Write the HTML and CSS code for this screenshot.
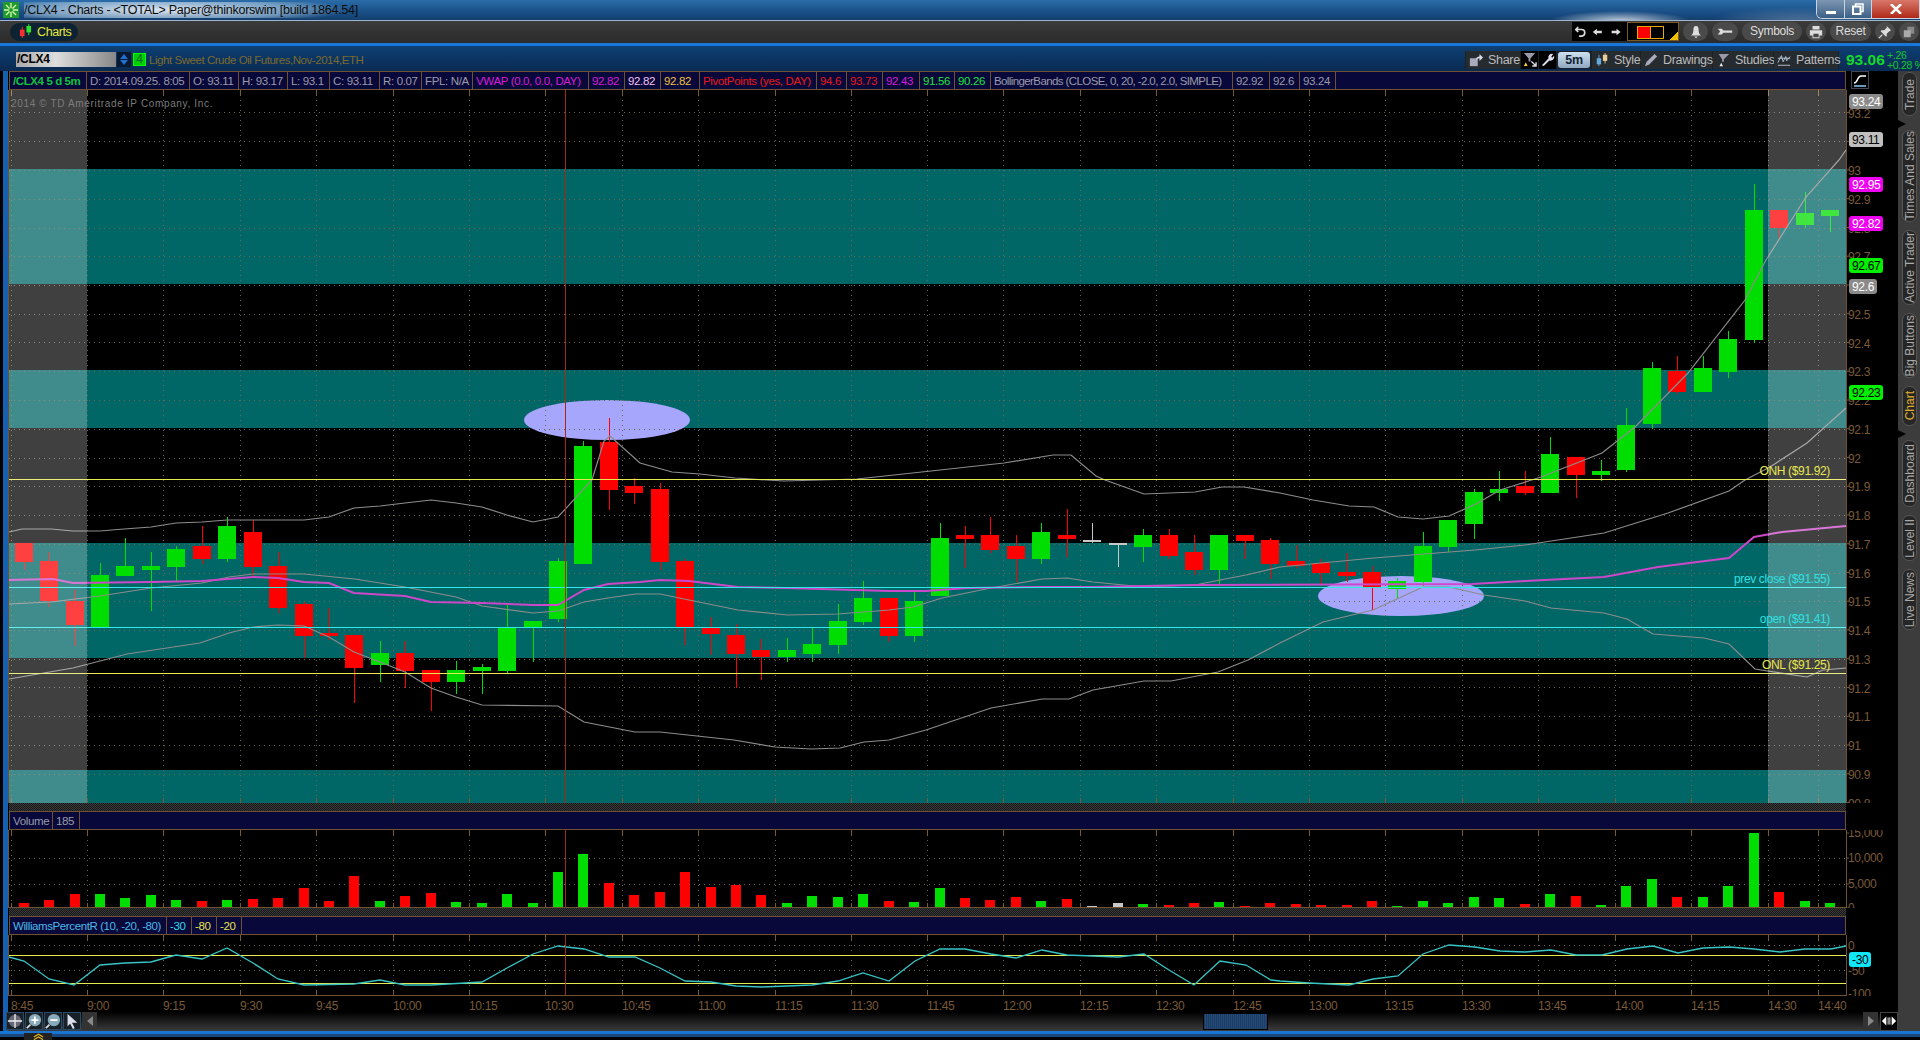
FILE: index.html
```html
<!DOCTYPE html>
<html lang="en">
<head>
    <meta charset="UTF-8">
    <meta name="viewport" content="width=device-width, initial-scale=1.0">
    <title>/CLX4 - Charts</title>
    <link rel="stylesheet" href="styles.css">
</head>
<body>
    <header class="titlebar">
        <svg class="app-logo" viewBox="0 0 16 16">
            <rect width="16" height="16" fill="#1f9a2c"/>
            <path d="M8 1v14M1 8h14M3 3l10 10M13 3L3 13" stroke="#d8f8b0" stroke-width="1.4"/>
            <circle cx="8" cy="8" r="2" fill="#1f9a2c"/>
        </svg>
        <span class="title-text">/CLX4 - Charts - &lt;TOTAL&gt; Paper@thinkorswim [build 1864.54]</span>
        <div class="window-buttons">
            <div class="win-btn win-min"><span class="win-min-bar"></span></div>
            <div class="win-btn win-max">
                <svg class="win-max-icon" viewBox="0 0 12 12"><path d="M3.500 3V1h7.500v7.500H9" fill="none" stroke="#fff" stroke-width="1.500"/><path d="M1 3.500h7.500V11H1z" fill="none" stroke="#fff" stroke-width="2"/></svg>
            </div>
            <div class="win-btn win-close">
                <svg class="win-close-icon" viewBox="0 0 12 10"><path d="M1 0l10 10M11 0L1 10" stroke="#fff" stroke-width="2.500"/></svg>
            </div>
        </div>
    </header>

    <nav class="menubar">
        <div class="charts-pill">
            <svg class="charts-icon" viewBox="0 0 14 16">
                <path d="M3.500 3v12" stroke="#ff3030"/><rect x="1" y="6" width="5" height="7" fill="#ff3030"/>
                <path d="M10.500 0v12" stroke="#30e030"/><rect x="8" y="2" width="5" height="7" fill="#30e030"/>
            </svg>
            <span>Charts</span>
        </div>
        <div class="menu-right">
            <div class="history-box">
                <svg class="hist-icon" viewBox="0 0 14 14"><path d="M4 1L1 4l3 3M1 4h7a4 4 0 0 1 0 8H5" fill="none" stroke="#ddd" stroke-width="2"/></svg>
                <svg class="hist-icon" viewBox="0 0 14 14"><path d="M1 7l5-4v2.500h6v3H6V11z" fill="#ddd"/></svg>
                <svg class="hist-icon" viewBox="0 0 14 14"><path d="M13 7L8 3v2.500H2v3h6V11z" fill="#ddd"/></svg>
                <div class="color-box">
                    <div class="color-swatch"><span class="swatch-red"></span><span class="swatch-black"></span></div>
                </div>
            </div>
            <div class="round-btn btn-bell">
                <svg viewBox="0 0 16 16" class="round-icon"><path d="M8 1c2.500 0 3 2 3 5s1 5 3 6H2c2-1 3-3 3-6s.5-5 3-5zM6 13h4l-2 2z" fill="#ddd"/></svg>
            </div>
            <div class="round-btn btn-wrench">
                <svg viewBox="0 0 20 12" class="wrench-icon"><path d="M1 2h5l2 2h11v3H8l-2 2H1l3-3.500z" fill="#ddd"/></svg>
            </div>
            <div class="pill-btn btn-symbols">Symbols</div>
            <div class="round-btn btn-print">
                <svg viewBox="0 0 16 16" class="round-icon"><path d="M4 1h8v4H4zM1 6h14v6h-3v3H4v-3H1z" fill="#ddd"/><path d="M5 10h6v4H5z" fill="#444"/></svg>
            </div>
            <div class="pill-btn btn-reset">Reset</div>
            <div class="round-btn btn-print">
                <svg viewBox="0 0 16 16" class="round-icon"><path d="M10 1l5 5-2 1-3 3 0 3-1 0-6-6 1-1h3l3-3z" fill="#ddd"/><path d="M5 11l-4 4" stroke="#ddd" stroke-width="1.500"/></svg>
            </div>
            <div class="round-btn btn-copy">
                <svg viewBox="0 0 16 16" class="round-icon"><path d="M6 2h8v8H6z" fill="#888"/><path d="M2 6h8v8H2z" fill="#aaa"/></svg>
            </div>
        </div>
    </nav>

    <section class="symbolbar">
        <div class="symbol-input">/CLX4</div>
        <div class="symbol-spin"><span class="spin-up"></span><span class="spin-down"></span></div>
        <div class="symbol-badge">4</div>
        <div class="symbol-name">Light Sweet Crude Oil Futures,Nov-2014,ETH</div>
        <div class="chart-tools">
            <div class="tool tool-share">
                <svg class="tool-icon" viewBox="0 0 16 16"><path d="M1 6h9v9H1z" fill="#aab"/><path d="M8 8c0-3 2-4 4-4V1l4 4-4 4V6c-2 0-3 1-4 2z" fill="#dde"/></svg>
                Share
            </div>
            <div class="tool-square">
                <svg viewBox="0 0 16 16"><path d="M2 1h12L9 7v3H7V7z" fill="#99a"/><path d="M4 11l2 4H2z" fill="#fc3"/><path d="M10 10l5 5M15 11v4h-4" stroke="#dde" fill="none" stroke-width="1.500"/></svg>
            </div>
            <div class="tool-square">
                <svg viewBox="0 0 16 16"><path d="M2 14l7-7a4 4 0 0 1 5-5l-2 3 1 1 2-2a4 4 0 0 1-5 5l-6 6z" fill="#dde"/></svg>
            </div>
            <div class="tool-period">5m</div>
            <div class="tool tool-style">
                <svg class="tool-icon" viewBox="0 0 14 16"><path d="M3.500 2v13" stroke="#6ad"/><rect x="1" y="6" width="5" height="7" fill="#6ad"/><path d="M10.500 0v12" stroke="#ec9"/><rect x="8" y="2" width="5" height="7" fill="#ec9"/></svg>
                Style
            </div>
            <div class="tool tool-draw">
                <svg class="tool-icon" viewBox="0 0 16 16"><path d="M1 15l2-5L12 1l3 3-9 9z" fill="#aab"/></svg>
                Drawings
            </div>
            <div class="tool tool-studies">
                <svg class="tool-icon" viewBox="0 0 16 16"><path d="M3 1h12L9 7v3H7V7z" fill="#99a"/><path d="M6 11l2 4H4z" fill="#eee"/></svg>
                Studies
            </div>
            <div class="tool tool-patterns">
                <svg class="tool-icon" viewBox="0 0 16 16"><path d="M1 14h14M1 11l4-8 2 7 3-6 1 5 4-5M1 6h14" fill="none" stroke="#bcd"/></svg>
                Patterns
            </div>
        </div>
        <div class="last-price">93.06</div>
        <div class="last-change"><span>+.26</span><span>+0.28 %</span></div>
    </section>

    <div class="workspace">
        <main class="charts">
            <!-- Price pane -->
            <div class="pane-row">
                <div class="info-bar info-main">
                    <div class="cell c-symbol">/CLX4 5 d 5m</div>
                    <div class="cell">D: 2014.09.25. 8:05</div>
                    <div class="cell">O: 93.11</div>
                    <div class="cell">H: 93.17</div>
                    <div class="cell">L: 93.1</div>
                    <div class="cell">C: 93.11</div>
                    <div class="cell">R: 0.07</div>
                    <div class="cell">FPL: N/A</div>
                    <div class="cell c-magenta">VWAP (0.0, 0.0, DAY)</div>
                    <div class="cell c-magenta">92.82</div>
                    <div class="cell c-pink">92.82</div>
                    <div class="cell c-orange">92.82</div>
                    <div class="cell c-red">PivotPoints (yes, DAY)</div>
                    <div class="cell c-red">94.6</div>
                    <div class="cell c-red">93.73</div>
                    <div class="cell c-magenta">92.43</div>
                    <div class="cell c-green">91.56</div>
                    <div class="cell c-green">90.26</div>
                    <div class="cell c-tight">BollingerBands (CLOSE, 0, 20, -2.0, 2.0, SIMPLE)</div>
                    <div class="cell">92.92</div>
                    <div class="cell">92.6</div>
                    <div class="cell">93.24</div>
                </div>
                <div class="axis-corner">
                    <svg class="scale-icon" viewBox="0 0 18 18">
                        <rect x=".5" y=".5" width="17" height="17" fill="#000" stroke="#445"/>
                        <path d="M3 12c4 0 3-7 7-7h5" fill="none" stroke="#fff" stroke-width="1.500"/>
                        <path d="M3 15h12" stroke="#8cf" stroke-width="1.500"/>
                    </svg>
                </div>
            </div>
            <svg id="price-pane" class="pane pane-price" viewBox="8 90 1890 713"></svg>

            <div class="splitter"></div>

            <!-- Volume pane -->
            <div class="info-bar info-volume">
                <div class="cell">Volume</div>
                <div class="cell">185</div>
            </div>
            <svg id="volume-pane" class="pane pane-volume" viewBox="8 830 1890 78"></svg>

            <div class="splitter"></div>

            <!-- Williams %R pane -->
            <div class="info-bar info-williams">
                <div class="cell c-blue">WilliamsPercentR (10, -20, -80)</div>
                <div class="cell c-cyan">-30</div>
                <div class="cell c-yellow">-80</div>
                <div class="cell c-yellow">-20</div>
            </div>
            <svg id="williams-pane" class="pane pane-williams" viewBox="8 935 1890 61"></svg>

            <svg id="time-axis" class="pane pane-time" viewBox="8 996 1890 16"></svg>

            <div class="scrollbar">
                <div class="scroll-tool scroll-tool-first">
                    <svg viewBox="0 0 18 18"><circle cx="9" cy="9" r="7" fill="#667"/><path d="M9 1v16M1 9h16" stroke="#eee" stroke-width="1.500"/></svg>
                </div>
                <div class="scroll-tool">
                    <svg viewBox="0 0 18 18"><path d="M1 17l4-4" stroke="#ddd" stroke-width="2"/><circle cx="10" cy="8" r="7" fill="#8ab"/><path d="M10 4v8M6 8h8" stroke="#fff" stroke-width="2"/></svg>
                </div>
                <div class="scroll-tool">
                    <svg viewBox="0 0 18 18"><path d="M1 17l4-4" stroke="#ddd" stroke-width="2"/><circle cx="10" cy="8" r="7" fill="#8ab"/><path d="M6 8h8" stroke="#fff" stroke-width="2"/></svg>
                </div>
                <div class="scroll-tool">
                    <svg viewBox="0 0 18 18"><path d="M4 1l11 10H9l3 6-2 1-3-6-3 3z" fill="#dde"/></svg>
                </div>
                <div class="scroll-arrow"><span class="arrow-left"></span></div>
                <div class="scroll-thumb"></div>
                <div class="scroll-arrow scroll-arrow-right"><span class="arrow-right"></span></div>
                <div class="scroll-expand">
                    <svg viewBox="0 0 18 18"><path d="M6 4v10L1 9zM12 4v10l5-5z" fill="#fff"/><path d="M8 5v8M10 5v8" stroke="#fff"/></svg>
                </div>
            </div>
        </main>

        <aside class="side-tabs">
            <div class="side-tab tab-trade"><span>Trade</span></div>
            <div class="side-tab tab-sales tab-break"><span>Times And Sales</span></div>
            <div class="side-tab tab-active"><span>Active Trader</span></div>
            <div class="side-tab tab-big"><span>Big Buttons</span></div>
            <div class="side-tab tab-chart"><span>Chart</span></div>
            <div class="side-tab tab-dash tab-break"><span>Dashboard</span></div>
            <div class="side-tab tab-level"><span>Level II</span></div>
            <div class="side-tab tab-news"><span>Live News</span></div>
        </aside>
    </div>

    <footer class="window-foot">
        <div class="foot-tab">
            <svg viewBox="0 0 12 7"><path d="M1 4l5-3 5 3M1 7l5-3 5 3" fill="none" stroke="#e8b820" stroke-width="1.200"/></svg>
        </div>
    </footer>

    <script src="chart.js"></script>
</body>
</html>
```

FILE: styles.css
```css
/* Base Styles */
* {
    margin: 0;
    padding: 0;
    box-sizing: border-box;
}

html, body {
    height: 1040px;
    overflow: hidden;
    background: #000;
}

body {
    font-family: 'Liberation Sans', Arial, sans-serif;
    font-size: 12px;
    letter-spacing: -0.3px;
    color: #aaa;
    display: flex;
    flex-direction: column;
}

svg {
    display: block;
}

/* Title bar */
.titlebar {
    height: 21px;
    display: flex;
    align-items: center;
    padding-left: 3px;
    border-bottom: 1px solid #9db4cc;
    background:
        radial-gradient(ellipse 70px 10px at 1620px 21px, rgba(255,255,255,0.75), transparent),
        radial-gradient(ellipse 90px 14px at 1800px 21px, rgba(255,255,255,0.25), transparent),
        linear-gradient(180deg, #2a6ca8 0%, #1a4f86 60%, #123f70 100%);
}

.app-logo {
    width: 16px;
    height: 16px;
    margin-right: 5px;
}

.title-text {
    font-size: 12.500px;
    letter-spacing: -0.25px;
    color: #0c0c0c;
    padding: 1px 8px 1px 0;
    background: radial-gradient(ellipse 55% 90% at 40% 50%, rgba(240,245,250,0.9), rgba(170,200,225,0.6) 70%, transparent);
}

.window-buttons {
    margin-left: auto;
    display: flex;
    align-self: flex-start;
    height: 19px;
    border: 1px solid #c8d4e0;
    border-top: 0;
    border-radius: 0 0 0 6px;
    overflow: hidden;
}

.win-btn {
    display: flex;
    align-items: center;
    justify-content: center;
}

.win-min {
    width: 28px;
    background: linear-gradient(180deg, #7d97b3, #3c5f86);
    border-right: 1px solid #c8d4e0;
}

.win-min-bar {
    width: 10px;
    height: 3px;
    background: #fff;
    margin-top: 6px;
}

.win-max {
    width: 27px;
    background: linear-gradient(180deg, #7d97b3, #3c5f86);
    border-right: 1px solid #c8d4e0;
}

.win-max-icon {
    width: 12px;
    height: 12px;
}

.win-close {
    width: 47px;
    background: linear-gradient(180deg, #d8786a, #b02818);
}

.win-close-icon {
    width: 12px;
    height: 10px;
}

/* Menu bar */
.menubar {
    height: 22px;
    display: flex;
    align-items: center;
    padding-left: 10px;
    background: linear-gradient(180deg, #3b3b3b, #2b2b2b);
}

.charts-pill {
    width: 68px;
    height: 18px;
    display: flex;
    align-items: center;
    gap: 5px;
    padding-left: 9px;
    border-radius: 9px;
    background: #0d2233;
    color: #e6e83c;
    font-size: 12.500px;
    letter-spacing: -0.4px;
}

.charts-icon {
    width: 13px;
    height: 15px;
}

.menu-right {
    margin-left: auto;
    display: flex;
    align-items: center;
    gap: 4px;
    width: 348px;
    overflow: hidden;
}

.history-box {
    width: 107px;
    height: 19px;
    flex-shrink: 0;
    display: flex;
    align-items: center;
    background: #000;
    padding-left: 3px;
    gap: 6px;
}

.hist-icon {
    width: 12px;
    height: 12px;
}

.color-box {
    width: 54px;
    height: 19px;
    margin-left: auto;
    border: 1px solid #7a5a20;
    padding: 3px 0 0 9px;
    background: linear-gradient(135deg, #000 88%, #f0c000 88%);
}

.color-swatch {
    width: 27px;
    height: 13px;
    display: flex;
    border: 1px solid #e8a800;
}

.swatch-red {
    flex: 1;
    background: #f00;
    border-right: 1px solid #e8a800;
}

.swatch-black {
    flex: 1;
    background: #000;
}

.round-btn {
    height: 19px;
    flex-shrink: 0;
    display: flex;
    align-items: center;
    justify-content: center;
    border-radius: 10px;
    background: #4a4a4a;
}

.btn-bell { width: 25px; }
.btn-wrench { width: 26px; }
.btn-print { width: 20px; }
.btn-copy { width: 20px; }

.round-icon {
    width: 14px;
    height: 14px;
}

.wrench-icon {
    width: 16px;
    height: 10px;
}

.pill-btn {
    height: 19px;
    flex-shrink: 0;
    border-radius: 10px;
    background: #4a4a4a;
    color: #ddd;
    text-align: center;
    line-height: 19px;
    font-size: 12px;
}

.btn-symbols { width: 60px; }
.btn-reset { width: 41px; }

/* Symbol bar */
.symbolbar {
    height: 28px;
    display: flex;
    align-items: center;
    padding: 3px 0 0 16px;
    border-top: 3px solid #1877d8;
    background: linear-gradient(180deg, #0d4074, #0a2a52);
}

.symbol-input {
    width: 100px;
    height: 15px;
    padding-left: 1px;
    background: linear-gradient(90deg, #aaa, #ddd 40%, #888);
    color: #000;
    font-weight: bold;
    line-height: 15px;
}

.symbol-spin {
    width: 14px;
    height: 15px;
    margin-left: 1px;
    background: #0a1830;
    display: flex;
    flex-direction: column;
    align-items: center;
    justify-content: center;
    gap: 1px;
}

.spin-up {
    border: 4px solid transparent;
    border-top: 0;
    border-bottom: 5px solid #2070d0;
}

.spin-down {
    border: 4px solid transparent;
    border-bottom: 0;
    border-top: 5px solid #2070d0;
}

.symbol-badge {
    width: 13px;
    height: 13px;
    margin-left: 2px;
    background: #0c0;
    border: 1px solid #0f0;
    color: #063;
    text-align: center;
    line-height: 11px;
}

.symbol-name {
    margin-left: 3px;
    color: #7c6a2c;
    font-size: 11.500px;
    letter-spacing: -0.45px;
}

.chart-tools {
    margin-left: auto;
    display: flex;
    gap: 1px;
    height: 18px;
    padding: 0 1px;
    color: #bbb;
    background: #1a2128;
    font-size: 12.500px;
}

.tool {
    display: flex;
    align-items: center;
    gap: 5px;
    padding-left: 3px;
    background: #262b30;
}

.tool-share { width: 54px; }
.tool-style { width: 48px; }
.tool-draw { width: 71px; }
.tool-studies { width: 60px; }
.tool-patterns { width: 64px; }

.tool-icon {
    width: 14px;
    height: 14px;
    flex-shrink: 0;
}

.tool-square {
    width: 17px;
    background: #000;
    display: flex;
    align-items: center;
    justify-content: center;
}

.tool-square svg {
    width: 15px;
    height: 15px;
}

.tool-period {
    width: 32px;
    margin: 1px;
    border-radius: 3px;
    background: linear-gradient(180deg, #cfe0f0, #8fa8c0);
    color: #123;
    font-weight: bold;
    text-align: center;
    line-height: 16px;
}

.last-price {
    margin-left: 7px;
    width: 41px;
    color: #14d82c;
    font-size: 15.500px;
    font-weight: bold;
    letter-spacing: 0;
}

.last-change {
    width: 33px;
    display: flex;
    flex-direction: column;
    color: #14c82c;
    font-size: 10.500px;
    line-height: 10px;
    white-space: nowrap;
}

/* Chart column */
.workspace {
    height: 961px;
    display: flex;
    border-left: 3px solid #000;
}

.charts {
    width: 1895px;
    border-left: 5px solid #1560b0;
    display: flex;
    flex-direction: column;
}

.pane-row {
    display: flex;
    height: 19px;
}

.axis-corner {
    width: 52px;
    background: #000;
    padding-left: 5px;
}

.scale-icon {
    width: 18px;
    height: 18px;
}

.info-bar {
    width: 1837px;
    height: 19px;
    margin-left: 1px;
    display: grid;
    background: #08083a;
    border: 1px solid #6e5232;
    font-size: 11.500px;
    letter-spacing: -0.35px;
}

.info-main {
    grid-template-columns: 77px 103px 49px 49px 42px 50px 42px 51px 116px 36px 36px 39px 117px 30px 36px 37px 35px 36px 242px 37px 30px 36px;
}

.info-volume {
    grid-template-columns: 43px 27px;
}

.info-williams {
    grid-template-columns: 157px 25px 25px 25px;
}

.cell {
    padding-left: 3px;
    border-right: 1px solid #6e5232;
    line-height: 18px;
    white-space: nowrap;
    overflow: hidden;
    color: #9a9aa8;
}

.c-symbol { color: #12c040; font-weight: bold; letter-spacing: -0.4px; }
.c-magenta { color: #d81ad8; }
.c-pink { color: #f4c0f0; }
.c-orange { color: #f0c040; }
.c-red { color: #e81818; }
.c-green { color: #20e040; }
.c-blue { color: #4ab8e8; letter-spacing: -0.4px; }
.c-cyan { color: #30d8e8; }
.c-yellow { color: #e8e050; }
.c-tight { letter-spacing: -0.6px; }

.pane-price { width: 1890px; height: 713px; }
.pane-volume { width: 1890px; height: 78px; }
.pane-williams { width: 1890px; height: 61px; }
.pane-time { width: 1890px; height: 16px; }

.splitter {
    height: 8px;
    width: 1837px;
    margin-left: 1px;
    background: repeating-conic-gradient(#3a3a3a 0 25%, #181818 0 50%) 0 0 / 2px 2px;
}

/* Chart svg pieces */
.grid-line {
    stroke: #6a6454;
    stroke-dasharray: 1 4;
    stroke-width: 1;
}

.tick-line {
    stroke: #7a5a30;
    stroke-width: 1;
}

.axis-line {
    stroke: #6e5232;
    stroke-width: 1;
}

.band { fill: #006666; }
.shade { fill: rgba(255,255,255,0.25); }
.marker { fill: #a6a6fc; }

.bb-line {
    fill: none;
    stroke: #8c8c8c;
    stroke-width: 1.200;
}

.vwap-line {
    fill: none;
    stroke: #cc48c8;
    stroke-width: 2;
}

.williams-line {
    fill: none;
    stroke: #38c4c4;
    stroke-width: 1.300;
}

.level-yellow { stroke: #e8e850; stroke-width: 1; }
.level-cyan { stroke: #30e8e8; stroke-width: 1; }
.cursor-line { stroke: #a82818; stroke-width: 1; }

.label-yellow { fill: #e8e850; }
.label-cyan { fill: #30e0e0; }

.pane text {
    font-family: 'Liberation Sans', Arial, sans-serif;
    font-size: 12px;
    letter-spacing: -0.35px;
}

.axis-text { fill: #7a5a38; }

.pane .watermark {
    fill: #7c7c7c;
    font-size: 10px;
    letter-spacing: 0.650px;
}

.chip-text { fill: #fff; }
.chip-text-dark { fill: #000; }

/* Scroll bar */
.scrollbar {
    height: 19px;
    display: flex;
    align-items: center;
    gap: 1px;
    background: linear-gradient(180deg, #000, #3c3c3c);
}

.scroll-tool {
    width: 18px;
    height: 18px;
    border: 1px solid #2a4a6a;
    background: #182028;
}

.scroll-tool-first {
    margin-left: -2px;
}

.scroll-arrow {
    width: 15px;
    height: 18px;
    background: #333;
    display: flex;
    align-items: center;
    justify-content: center;
}

.arrow-left {
    border: 5px solid transparent;
    border-left: 0;
    border-right: 6px solid #888;
}

.arrow-right {
    border: 5px solid transparent;
    border-right: 0;
    border-left: 6px solid #888;
}

.scroll-thumb {
    width: 65px;
    height: 17px;
    margin-left: 1105px;
    border: 1px solid #000;
    background: repeating-linear-gradient(90deg, #1c3c64 0 1px, #244a78 1px 2px);
}

.scroll-arrow-right {
    margin-left: 594px;
}

.scroll-expand {
    width: 18px;
    height: 19px;
    margin-left: 1px;
    background: #000;
    border: 1px solid #444;
}

/* Right tabs */
.side-tabs {
    width: 22px;
    background: #3c3c3c;
    display: flex;
    flex-direction: column;
    gap: 8px;
    padding: 1px 3px 0 4px;
}

.side-tab {
    position: relative;
    background: #262626;
    border: 1px solid #555;
    border-radius: 7px;
    display: flex;
    align-items: center;
    justify-content: center;
    color: #aaa;
    font-size: 12px;
    letter-spacing: 0;
}

.side-tab span {
    writing-mode: vertical-rl;
    transform: rotate(180deg);
    white-space: nowrap;
}

.tab-trade { height: 44px; }
.tab-sales { height: 92px; }
.tab-active { height: 75px; }
.tab-big { height: 65px; }
.tab-chart { height: 40px; color: #e0b030; }
.tab-dash { height: 67px; }
.tab-level { height: 46px; }
.tab-news { height: 61px; }

.tab-break {
    margin-top: 6px;
}

/* little notch under the tab groups */
.tab-break::before {
    content: "";
    position: absolute;
    left: -5px;
    top: -11px;
    border: 4px solid transparent;
    border-left: 8px solid #000;
}

/* Window foot */
.window-foot {
    height: 9px;
    position: relative;
    background: linear-gradient(180deg, #1a74d4 0 3px, #17477c 3px 6px, #000 6px);
}

.foot-tab {
    position: absolute;
    left: 24px;
    top: 2px;
    width: 28px;
    height: 7px;
    background: #222;
    display: flex;
    justify-content: center;
}

.foot-tab svg {
    width: 11px;
    height: 7px;
}
```

FILE: chart.js
```js
// 5 minute candles: [close colour, body top, body bottom, wick top, wick bottom], in page pixels
const candles = [
    ['r',543,562,543,570], ['r',561,601,552,607], ['r',601,625,590,646], ['g',575,627,563,627],
    ['g',566,576,538,576], ['g',566,570,552,611], ['g',549,567,546,581], ['r',546,559,526,564],
    ['g',526,559,517,562], ['r',532,567,520,577], ['r',566,608,552,613], ['r',604,636,602,658],
    ['r',633,636,608,640], ['r',635,668,635,703], ['g',653,665,641,682], ['r',653,671,641,688],
    ['r',670,682,670,711], ['g',670,682,661,694], ['g',667,671,664,694], ['g',627,671,605,673],
    ['g',621,627,621,662], ['g',561,619,558,622], ['g',446,564,441,564], ['r',442,490,418,510],
    ['r',486,493,478,504], ['r',489,562,483,570], ['r',561,627,559,645], ['r',628,634,617,655],
    ['r',635,654,624,688], ['r',650,657,639,680], ['g',650,657,638,662], ['g',644,654,627,662],
    ['g',621,645,604,654], ['g',598,622,581,625], ['r',598,636,598,642], ['g',601,636,592,642],
    ['g',538,596,523,596], ['r',535,539,526,568], ['r',535,550,517,553], ['r',546,559,535,582],
    ['g',532,559,523,564], ['r',535,539,509,557], ['w',540,542,523,543], ['w',543,545,543,567],
    ['g',535,547,529,562], ['r',535,556,529,559], ['r',552,570,535,575], ['g',535,570,535,585],
    ['r',535,541,535,559], ['r',540,564,538,579], ['r',561,566,545,568], ['r',563,573,559,585],
    ['r',572,576,553,582], ['r',572,587,566,610], ['g',581,589,578,599], ['g',546,582,532,586],
    ['g',520,547,520,552], ['g',492,524,489,539], ['g',489,493,471,501], ['r',486,493,471,495],
    ['g',454,493,437,493], ['r',457,475,457,498], ['g',471,475,460,481], ['g',425,470,408,472],
    ['g',368,424,362,429], ['r',371,392,356,394], ['g',368,392,356,392], ['g',339,372,331,378],
    ['g',210,340,184,343], ['r',210,228,210,240], ['g',213,225,192,228], ['g',210,216,210,232]
];

// top of each volume bar, same order as the candles
const volumeTops = [
    903,900,894,894,898,895,900,901,900,899,898,888,901,876,901,896,893,902,903,894,903,872,854,883,
    895,892,872,887,885,895,903,896,897,894,901,902,888,898,900,897,901,899,906,903,904,905,903,902,
    906,903,904,905,905,901,906,901,903,897,898,904,894,896,905,886,879,897,897,886,833,892,901,903
];

const upperBand = [[9,532],[22,529],[51,529],[73,531],[100,531],[124,529],[151,527],[176,523],[202,522],[227,520],[253,520],[304,520],[329,517],[354,508],[380,506],[405,503],[431,500],[456,503],[482,507],[507,515],[533,522],[558,517],[592,480],[604,441],[610,436],[640,463],[672,472],[700,474],[735,478],[784,481],[857,479],[931,471],[1004,463],[1053,455],[1071,455],[1096,476],[1105,480],[1144,494],[1195,492],[1222,487],[1244,487],[1280,493],[1313,500],[1349,506],[1374,507],[1398,517],[1423,519],[1449,516],[1476,504],[1500,490],[1541,477],[1602,453],[1635,427],[1688,373],[1745,300],[1766,260],[1806,197],[1839,160],[1846,150]];

const middleBand = [[9,604],[51,602],[100,596],[151,588],[202,583],[229,577],[253,574],[304,574],[355,579],[405,587],[456,597],[482,606],[533,613],[558,611],[584,602],[608,598],[635,594],[660,594],[689,600],[738,610],[787,615],[838,614],[889,610],[913,607],[942,598],[991,588],[1042,579],[1067,578],[1093,582],[1144,587],[1195,585],[1220,580],[1246,575],[1280,567],[1321,563],[1374,558],[1424,554],[1475,550],[1525,545],[1604,533],[1668,513],[1729,491],[1745,480],[1770,467],[1807,443],[1846,408]];

const lowerBand = [[9,679],[73,668],[127,654],[200,643],[229,633],[253,627],[278,625],[304,626],[329,637],[354,652],[380,662],[405,672],[431,688],[456,697],[482,705],[558,706],[584,722],[635,732],[660,732],[734,740],[775,747],[811,749],[840,748],[864,742],[889,740],[926,730],[991,708],[1042,699],[1069,699],[1093,690],[1144,681],[1171,681],[1218,672],[1248,660],[1280,643],[1323,622],[1373,610],[1423,587],[1449,587],[1484,595],[1525,601],[1551,608],[1604,613],[1627,619],[1653,634],[1704,638],[1729,644],[1755,669],[1807,677],[1823,670],[1846,668]];

const vwap = [[9,580],[53,579],[73,583],[151,582],[202,581],[253,577],[278,578],[304,582],[329,583],[354,593],[405,596],[431,602],[482,603],[533,605],[558,605],[584,590],[608,584],[640,582],[660,580],[689,581],[738,587],[787,588],[889,591],[926,591],[967,588],[1040,587],[1093,587],[1144,586],[1195,585],[1472,584],[1525,581],[1604,577],[1658,567],[1729,558],[1754,537],[1782,532],[1846,526]];

const williams = [[9,957],[24,961],[49,979],[74,985],[100,965],[125,963],[151,962],[176,955],[202,959],[227,948],[253,963],[278,979],[304,985],[354,984],[380,980],[405,985],[431,985],[482,982],[507,968],[533,954],[558,946],[584,949],[609,957],[635,957],[660,968],[685,981],[711,982],[736,986],[762,987],[812,985],[838,981],[863,973],[889,981],[915,961],[940,949],[965,949],[991,954],[1016,958],[1042,950],[1067,955],[1118,957],[1144,954],[1169,970],[1194,985],[1220,961],[1246,965],[1271,980],[1280,981],[1309,983],[1349,985],[1373,979],[1398,976],[1423,954],[1449,945],[1475,947],[1500,951],[1525,952],[1551,950],[1576,955],[1602,955],[1627,949],[1653,946],[1678,953],[1703,948],[1729,947],[1754,949],[1780,952],[1805,949],[1831,949],[1846,946]];

const timeTicks = [
    [11,'8:45'],[87,'9:00'],[163,'9:15'],[240,'9:30'],[316,'9:45'],[393,'10:00'],[469,'10:15'],
    [545,'10:30'],[622,'10:45'],[698,'11:00'],[775,'11:15'],[851,'11:30'],[927,'11:45'],[1003,'12:00'],
    [1080,'12:15'],[1156,'12:30'],[1233,'12:45'],[1309,'13:00'],[1385,'13:15'],[1462,'13:30'],
    [1538,'13:45'],[1615,'14:00'],[1691,'14:15'],[1768,'14:30'],[1818,'14:40']
];

const PANE_LEFT = 9;
const PANE_RIGHT = 1846;
const CURSOR_X = 565.5;
const COLORS = { r: '#ff0000', g: '#00dd00', w: '#c8c8c8' };

// these axis prices sit fully behind a price chip
const HIDDEN_PRICES = [931, 926];

const candleX = (i) => Math.round(23.7 + 25.44 * i);

// small helper for building svg nodes
function add(parent, tag, attrs, text) {
    const node = document.createElementNS('http://www.w3.org/2000/svg', tag);
    Object.entries(attrs).forEach(([key, value]) => node.setAttribute(key, value));
    if (text !== undefined) node.textContent = text;
    parent.appendChild(node);
    return node;
}

const addRect = (parent, x, y, w, h, attrs) => add(parent, 'rect', { x, y, width: w, height: h, ...attrs });
const addLine = (parent, x1, y1, x2, y2, cls) => add(parent, 'line', { x1, y1, x2, y2, class: cls });
const addPath = (parent, points, cls) => add(parent, 'polyline', { points: points.join(' '), class: cls });

function addVerticals(pane, top, bottom) {
    timeTicks.forEach(([x]) => {
        addLine(pane, x + 0.5, top, x + 0.5, bottom, 'grid-line');
        addLine(pane, x + 0.5, top, x + 0.5, top + 5, 'tick-line');
        addLine(pane, x + 0.5, bottom - 5, x + 0.5, bottom, 'tick-line');
    });
}

function addRows(pane, rows) {
    rows.forEach((y) => addLine(pane, PANE_LEFT, y + 0.5, PANE_RIGHT, y + 0.5, 'grid-line'));
}

function addAxisLines(pane, top, bottom) {
    addLine(pane, PANE_LEFT - 0.5, top, PANE_LEFT - 0.5, bottom, 'axis-line');
    addLine(pane, PANE_RIGHT + 0.5, top, PANE_RIGHT + 0.5, bottom, 'axis-line');
}

function addChip(pane, y, width, fill, label, textClass) {
    addRect(pane, 1849, y, width, 15, { rx: 3, fill });
    add(pane, 'text', { x: 1852, y: y + 12, class: textClass }, label);
}

// Price pane
function drawPrice() {
    const pane = document.getElementById('price-pane');
    const priceY = (p) => 170 + (93 - p) * 287.5;

    [[169, 284], [370, 428], [543, 658], [770, 803]].forEach(([top, bottom]) => {
        addRect(pane, PANE_LEFT, top, PANE_RIGHT - PANE_LEFT, bottom - top, { class: 'band' });
    });

    add(pane, 'ellipse', { cx: 607, cy: 420, rx: 83, ry: 20, class: 'marker' });
    add(pane, 'ellipse', { cx: 1401, cy: 596, rx: 83, ry: 20, class: 'marker' });

    const rows = [];
    for (let p = 932; p >= 908; p--) rows.push(Math.round(priceY(p / 10)));
    addRows(pane, rows);
    addVerticals(pane, 90, 803);

    candles.forEach(([color, top, bottom, wickTop, wickBottom], i) => {
        const x = candleX(i);
        addRect(pane, x, wickTop, 1, wickBottom - wickTop, { fill: COLORS[color] });
        addRect(pane, x - 9, top, 18, Math.max(bottom - top, 2), { fill: COLORS[color] });
    });

    addPath(pane, upperBand, 'bb-line');
    addPath(pane, middleBand, 'bb-line');
    addPath(pane, lowerBand, 'bb-line');
    addPath(pane, vwap, 'vwap-line');

    addLine(pane, PANE_LEFT, 479.5, PANE_RIGHT, 479.5, 'level-yellow');
    addLine(pane, PANE_LEFT, 587.5, PANE_RIGHT, 587.5, 'level-cyan');
    addLine(pane, PANE_LEFT, 627.5, PANE_RIGHT, 627.5, 'level-cyan');
    addLine(pane, PANE_LEFT, 673.5, PANE_RIGHT, 673.5, 'level-yellow');

    // premarket and after hours shading goes over everything
    addRect(pane, PANE_LEFT, 90, 78, 713, { class: 'shade' });
    addRect(pane, 1768, 90, 78, 713, { class: 'shade' });
    addLine(pane, CURSOR_X, 90, CURSOR_X, 803, 'cursor-line');
    addAxisLines(pane, 90, 803);

    add(pane, 'text', { x: 11, y: 107, class: 'watermark' }, '2014 \u00a9 TD Ameritrade IP Company, Inc.');

    [
        [475, 'ONH ($91.92)', 'label-yellow'],
        [583, 'prev close ($91.55)', 'label-cyan'],
        [623, 'open ($91.41)', 'label-cyan'],
        [669, 'ONL ($91.25)', 'label-yellow']
    ].forEach(([y, label, cls]) => {
        add(pane, 'text', { x: 1830, y, 'text-anchor': 'end', class: cls }, label);
    });

    for (let p = 932; p >= 908; p--) {
        const y = priceY(p / 10);
        addLine(pane, PANE_RIGHT, y, PANE_RIGHT + 3, y, 'axis-line');
        if (!HIDDEN_PRICES.includes(p)) {
            add(pane, 'text', { x: 1848, y: y + 5, class: 'axis-text' }, String(p / 10));
        }
    }

    addChip(pane, 94, 34, '#8a8a8a', '93.24', 'chip-text');
    addChip(pane, 132, 34, '#c0c0c0', '93.11', 'chip-text-dark');
    addChip(pane, 177, 34, '#f000f0', '92.95', 'chip-text');
    addChip(pane, 216, 34, '#f000f0', '92.82', 'chip-text');
    addChip(pane, 258, 34, '#00f000', '92.67', 'chip-text-dark');
    addChip(pane, 279, 28, '#8a8a8a', '92.6', 'chip-text');
    addChip(pane, 385, 34, '#00f000', '92.23', 'chip-text-dark');
}

// Volume pane
function drawVolume() {
    const pane = document.getElementById('volume-pane');
    addRows(pane, [858, 884]);
    addVerticals(pane, 830, 908);

    volumeTops.forEach((top, i) => {
        addRect(pane, candleX(i) - 5, top, 10, 908 - top, { fill: COLORS[candles[i][0]] });
    });

    addLine(pane, CURSOR_X, 830, CURSOR_X, 908, 'cursor-line');
    addLine(pane, PANE_LEFT, 907.5, PANE_RIGHT, 907.5, 'axis-line');
    addAxisLines(pane, 830, 908);

    [[837, '15,000'], [862, '10,000'], [888, '5,000'], [912, '0']].forEach(([y, label]) => {
        addLine(pane, PANE_RIGHT, y - 4, PANE_RIGHT + 3, y - 4, 'axis-line');
        add(pane, 'text', { x: 1848, y, class: 'axis-text' }, label);
    });
}

// Williams %R pane
function drawWilliams() {
    const pane = document.getElementById('williams-pane');
    addRows(pane, [945, 970]);
    addVerticals(pane, 935, 996);

    addLine(pane, PANE_LEFT, 955.5, PANE_RIGHT, 955.5, 'level-yellow');
    addLine(pane, PANE_LEFT, 983.5, PANE_RIGHT, 983.5, 'level-yellow');
    addPath(pane, williams, 'williams-line');

    addLine(pane, CURSOR_X, 935, CURSOR_X, 996, 'cursor-line');
    addLine(pane, PANE_LEFT, 995.5, PANE_RIGHT, 995.5, 'axis-line');
    addAxisLines(pane, 935, 996);

    [[950, '0'], [975, '-50'], [998, '-100']].forEach(([y, label]) => {
        add(pane, 'text', { x: 1848, y, class: 'axis-text' }, label);
    });
    addRect(pane, 1849, 952, 22, 15, { rx: 3, fill: '#10e8f8' });
    add(pane, 'text', { x: 1852, y: 964, class: 'chip-text-dark' }, '-30');
}

function drawTimes() {
    const pane = document.getElementById('time-axis');
    timeTicks.forEach(([x, label]) => {
        add(pane, 'text', { x, y: 1010, class: 'axis-text' }, label);
    });
}

drawPrice();
drawVolume();
drawWilliams();
drawTimes();
```
